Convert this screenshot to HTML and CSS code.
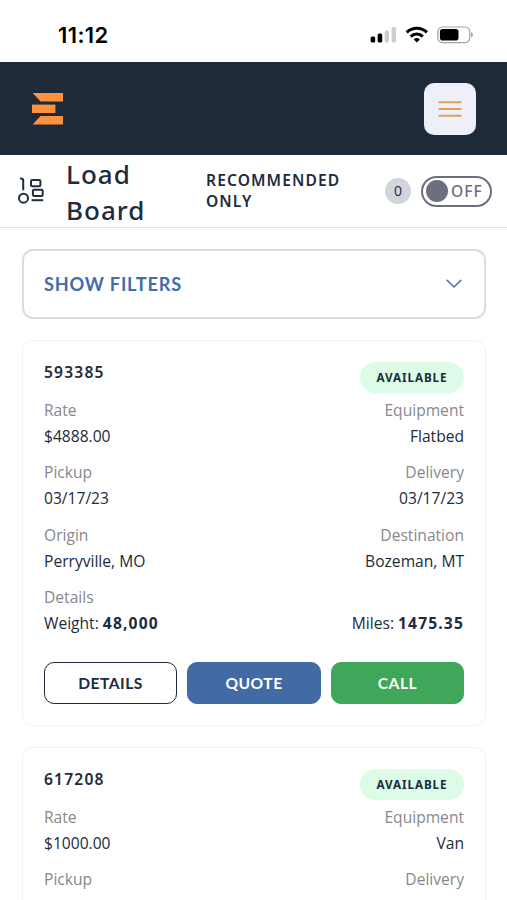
FILE: index.html
```
<!DOCTYPE html>
<html lang="en">
<head>
  <meta charset="UTF-8">
  <meta name="viewport" content="width=device-width, initial-scale=1.0">
  <title>Load Board</title>
  <link rel="stylesheet" href="styles.css">
</head>
<body>

  <div class="status-bar">
    <span class="time">11:12</span>
    <svg class="status-icons" width="104" height="20" viewBox="0 0 104 20">
      <rect x="1.6" y="11.5" width="4.6" height="6" rx="1.5"/>
      <rect x="8.6" y="8.5" width="4.6" height="9" rx="1.5"/>
      <rect x="15.6" y="5.5" width="4.4" height="12" rx="1.5" fill="#cfcfcf"/>
      <rect x="22.6" y="2" width="4.4" height="15.5" rx="1.5" fill="#cfcfcf"/>
      <g fill="none" stroke="#000" stroke-width="3">
        <path d="M37.7 7.4a14.4 14.4 0 0 1 20.2 0"/>
        <path d="M41.8 11.6a8.4 8.4 0 0 1 12 0"/>
      </g>
      <path d="M47.8 17.4l-3-3a4.3 4.3 0 0 1 6 0z"/>
      <rect x="68.8" y="2" width="32" height="15.6" rx="4.8" fill="none" stroke="#a3a3a3" stroke-width="1.2"/>
      <rect x="70.9" y="4.1" width="18.6" height="11.4" rx="2.8"/>
      <path d="M102 7.3q2 .8 2 2.5t-2 2.5z" fill="#a3a3a3"/>
    </svg>
  </div>

  <header class="navbar">
    <svg width="32" height="32" viewBox="0 0 32 32" fill="#fd9241">
      <path d="M.6 0H31v8.4H8.6z"/>
      <path d="M0 11.6h23.4V20H0z"/>
      <path d="M8.6 23H31v8.4H.6z"/>
    </svg>
    <button class="menu-btn" aria-label="Menu">
      <svg width="26" height="20" viewBox="0 0 26 20" fill="none" stroke="#dda352" stroke-width="2.1" stroke-linecap="round">
        <path d="M2.4 3.2h21.2M2.4 10h21.2M2.4 16.8h21.2"/>
      </svg>
    </button>
  </header>

  <div class="title-bar">
    <svg class="board-icon" width="28" height="28" viewBox="0 0 28 28" fill="none" stroke="#202b3c" stroke-width="2">
      <path d="M2 1.6h1q2.2 0 2.2 2.2v9.4"/>
      <circle cx="5.5" cy="21.2" r="4.5"/>
      <rect x="13" y="2.9" width="9.4" height="6.4" rx="1.4"/>
      <rect x="14.9" y="12.7" width="9.8" height="6.4" rx="1.4"/>
      <path d="M13.6 23.2h11.6"/>
    </svg>
    <h1>Load Board</h1>
    <span class="recommended">RECOMMENDED ONLY</span>
    <span class="count">0</span>
    <button class="toggle"><span class="knob"></span>OFF</button>
  </div>

  <main>
    <button class="filters">
      SHOW FILTERS
      <svg width="18" height="12" viewBox="0 0 18 12" fill="none" stroke="#4c78b5" stroke-width="1.6" stroke-linecap="round" stroke-linejoin="round">
        <path d="M2.2 2.4L9 9l6.8-6.6"/>
      </svg>
    </button>

    <section class="card">
      <div class="card-head">
        <span class="load-id">593385</span>
        <span class="badge">AVAILABLE</span>
      </div>
      <div class="row">
        <div><label>Rate</label><p>$4888.00</p></div>
        <div><label>Equipment</label><p>Flatbed</p></div>
      </div>
      <div class="row">
        <div><label>Pickup</label><p>03/17/23</p></div>
        <div><label>Delivery</label><p>03/17/23</p></div>
      </div>
      <div class="row">
        <div><label>Origin</label><p>Perryville, MO</p></div>
        <div><label>Destination</label><p>Bozeman, MT</p></div>
      </div>
      <div class="row">
        <div><label>Details</label><p>Weight: <b>48,000</b></p></div>
        <div><p>Miles: <b>1475.35</b></p></div>
      </div>
      <div class="actions">
        <button class="btn">DETAILS</button>
        <button class="btn quote">QUOTE</button>
        <button class="btn call">CALL</button>
      </div>
    </section>

    <section class="card">
      <div class="card-head">
        <span class="load-id">617208</span>
        <span class="badge">AVAILABLE</span>
      </div>
      <div class="row">
        <div><label>Rate</label><p>$1000.00</p></div>
        <div><label>Equipment</label><p>Van</p></div>
      </div>
      <div class="row">
        <div><label>Pickup</label></div>
        <div><label>Delivery</label></div>
      </div>
    </section>
  </main>

</body>
</html>
```
FILE: styles.css
```
* {
  box-sizing: border-box;
}
body {
  margin: 0;
  height: 900px;
  display: flex;
  flex-direction: column;
  overflow: hidden;
  background: #fff;
  color: #202b3c;
  font-family: "Open Sans", "Noto Sans", sans-serif;
  font-size: 15.6px;
}
button {
  font-family: inherit;
  color: inherit;
  padding: 0;
  background: #fff;
}
svg {
  display: block;
  flex: none;
}
.status-bar {
  height: 62px;
  flex: none;
  padding: 7px 34px 0 58px;
  display: flex;
  align-items: center;
  justify-content: space-between;
}
.time {
  font-family: Inter, sans-serif;
  font-size: 22px;
  font-weight: 600;
  letter-spacing: 0.4px;
  color: #000;
}
.navbar {
  height: 93px;
  flex: none;
  padding: 0 31px 0 32px;
  display: flex;
  align-items: center;
  justify-content: space-between;
  background: #1e2a38;
}
.menu-btn {
  width: 52px;
  height: 52px;
  display: flex;
  align-items: center;
  justify-content: center;
  border: none;
  border-radius: 10px;
  background: #edf0f8;
}
.title-bar {
  height: 73px;
  flex: none;
  padding: 0 15px 0 18px;
  display: flex;
  align-items: center;
  border-bottom: 1px solid #e3e4e7;
}
h1 {
  width: 140px;
  margin: 0 0 0 20px;
  padding: 2px 40px 0 0;
  font-family: "Noto Sans", sans-serif;
  font-size: 26px;
  font-weight: 500;
  line-height: 36.4px;
  letter-spacing: 1px;
}
.recommended {
  width: 179px;
  padding-right: 30px;
  font-family: "Noto Sans", sans-serif;
  font-size: 15.6px;
  font-weight: 600;
  line-height: 20.8px;
  letter-spacing: 1.1px;
}
.count {
  width: 26px;
  height: 26px;
  border-radius: 50%;
  background: #d1d4dc;
  font-size: 14px;
  line-height: 26px;
  text-align: center;
}
.toggle {
  width: 71px;
  height: 31px;
  margin-left: 10px;
  padding-left: 3px;
  display: flex;
  align-items: center;
  gap: 3px;
  border: 2px solid #6c6f7e;
  border-radius: 16px;
  color: #6c6f7e;
  font-family: "Noto Sans", sans-serif;
  font-size: 15.6px;
  font-weight: 500;
  letter-spacing: 1px;
}
.knob {
  width: 22px;
  height: 22px;
  flex: none;
  border-radius: 50%;
  background: #6c6f7e;
}
main {
  flex: 1;
  min-height: 0;
  overflow: hidden;
  padding: 21px 21px 0 22px;
}
.filters {
  width: 100%;
  height: 70px;
  padding: 0 21px 0 20px;
  display: flex;
  align-items: center;
  justify-content: space-between;
  border: 2px solid #dcdcde;
  border-radius: 11px;
  color: #426da9;
  font-family: Lato, sans-serif;
  font-size: 18.2px;
  font-weight: 700;
  letter-spacing: 0.8px;
}
.card {
  height: 386px;
  margin-top: 21px;
  padding: 21px 21px 0;
  border: 1px solid #f1f2f4;
  border-radius: 11px;
}
.card-head {
  height: 35px;
  display: flex;
  align-items: flex-start;
  justify-content: space-between;
}
.load-id {
  font-family: "Noto Sans", sans-serif;
  font-weight: 600;
  line-height: 20px;
  letter-spacing: 1.2px;
}
.badge {
  width: 104px;
  height: 31px;
  border-radius: 16px;
  background: #dcfce7;
  font-family: "Noto Sans", sans-serif;
  font-size: 11.7px;
  font-weight: 700;
  line-height: 30px;
  letter-spacing: 0.9px;
  text-align: center;
}
.row {
  display: flex;
  justify-content: space-between;
  align-items: flex-end;
  margin-bottom: 10.4px;
  line-height: 26px;
}
.row > div:last-child {
  text-align: right;
}
.row label {
  display: block;
  color: #87888c;
}
.row p {
  margin: 0;
}
.row b {
  font-family: "Noto Sans", sans-serif;
  font-weight: 700;
  line-height: 1;
  letter-spacing: 1.15px;
}
.actions {
  display: flex;
  gap: 10.4px;
  margin-top: 26px;
}
.btn {
  flex: 1;
  height: 42px;
  border: 1.5px solid #202b3c;
  border-radius: 10px;
  font-family: Lato, sans-serif;
  font-size: 15.6px;
  font-weight: 700;
  letter-spacing: 0.5px;
}
.quote {
  background: #426aa5;
  border-color: #426aa5;
  color: #fff;
}
.call {
  background: #3fa75a;
  border-color: #3fa75a;
  color: #fff;
}
```
